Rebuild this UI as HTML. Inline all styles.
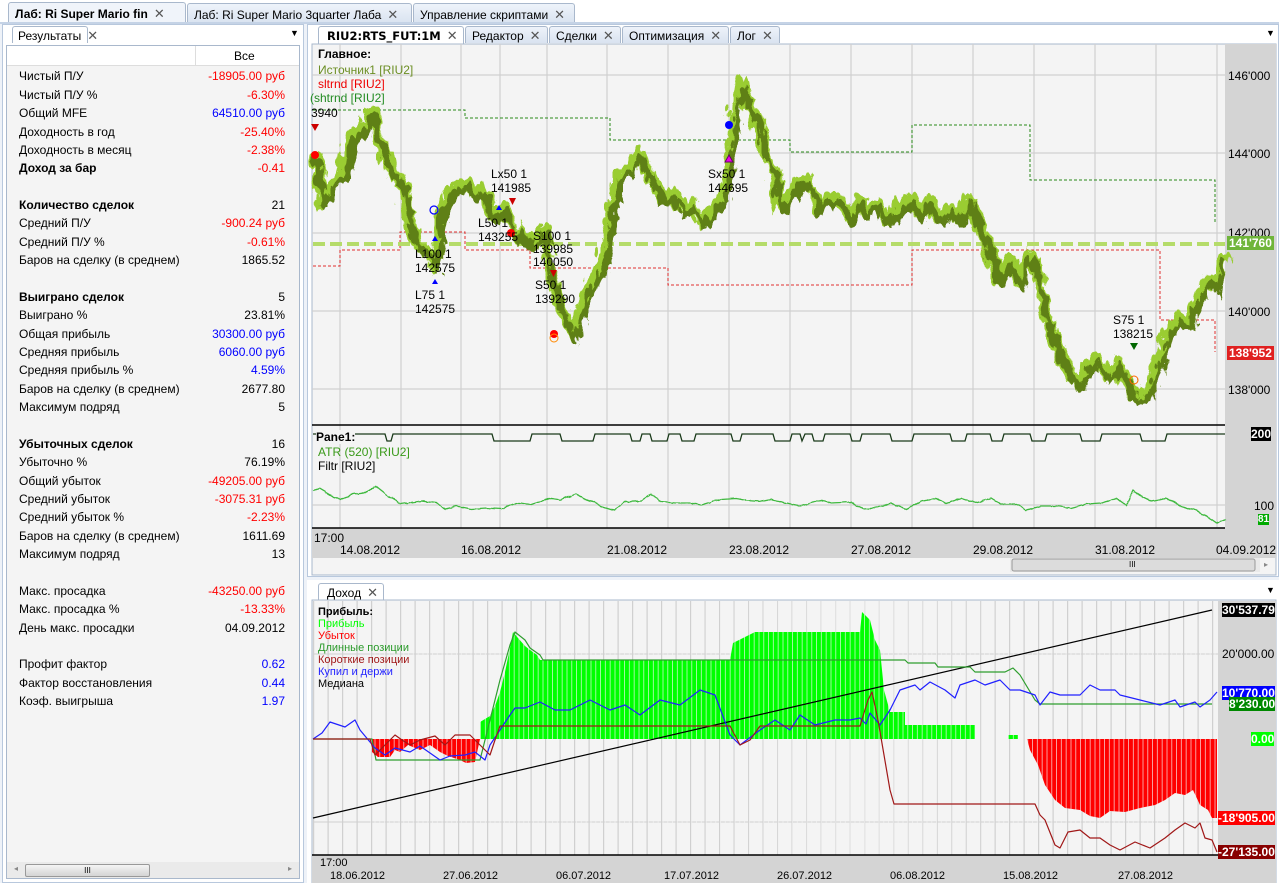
<!DOCTYPE html>
<html><head><meta charset="utf-8"><style>
*{margin:0;padding:0;box-sizing:border-box}
body{width:1279px;height:883px;overflow:hidden;background:#eef2f8;font-family:"Liberation Sans","DejaVu Sans",sans-serif;font-size:12px;color:#000;position:relative}
.a{position:absolute}
.tab{position:absolute;height:21px;border:1px solid #a9b8cc;border-bottom:none;background:linear-gradient(#eef3fa,#d9e3f0);font-size:12px;padding:3px 6px;white-space:nowrap;border-radius:3px 3px 0 0}
.tab.on{background:#f0f4fa;font-weight:bold}
.x{color:#555;font-weight:normal;margin-left:6px;font-size:13px}
.row{position:absolute;left:19px;width:266px;height:16px;font-size:12px}
.row span{position:absolute;right:0}
.r{color:#f00}.b{color:#00f}
.lbl{position:absolute;font-size:12px;font-family:"Liberation Sans",sans-serif;white-space:nowrap}
</style></head><body>
<div class="a" style="left:0;top:0;width:1279px;height:23px;background:#fff"></div>
<div class="tab on" style="left:8px;top:2px;width:178px;height:21px">Лаб: Ri Super Mario fin<span class="x">✕</span></div>
<div class="tab" style="left:187px;top:3px;width:225px;height:20px">Лаб: Ri Super Mario 3quarter Лаба<span class="x">✕</span></div>
<div class="tab" style="left:413px;top:3px;width:162px;height:20px">Управление скриптами<span class="x">✕</span></div>
<div class="a" style="left:0;top:22px;width:1279px;height:2px;background:#c5d3e6"></div>

<div class="a" style="left:2px;top:24px;width:302px;height:859px;background:#fff;border:1px solid #b8c8dd"></div>
<div class="tab" style="left:12px;top:26px;width:76px;height:17px;padding:1px 5px;background:#fff;font-size:12px">Результаты<span class="x">✕</span></div>
<div class="a" style="left:290px;top:28px;font-size:9px">▼</div>
<div class="a" style="left:6px;top:45px;width:294px;height:834px;background:#f4f4f4;border:1px solid #a9b8cc"></div>
<div class="a" style="left:7px;top:46px;width:292px;height:20px;background:#fff;border-bottom:1px solid #ddd"></div>
<div class="a" style="left:195px;top:46px;width:1px;height:20px;background:#ddd"></div>
<div class="a" style="left:234px;top:49px;font-size:12px">Все</div>
<div class="row" style="top:69px">Чистый П/У<span class="r">-18905.00 руб</span></div>
<div class="row" style="top:88px">Чистый П/У %<span class="r">-6.30%</span></div>
<div class="row" style="top:106px">Общий MFE<span class="b">64510.00 руб</span></div>
<div class="row" style="top:125px">Доходность в год<span class="r">-25.40%</span></div>
<div class="row" style="top:143px">Доходность в месяц<span class="r">-2.38%</span></div>
<div class="row" style="top:161px;font-weight:bold">Доход за бар<span class="r" style="font-weight:normal">-0.41</span></div>
<div class="row" style="top:198px;font-weight:bold">Количество сделок<span style="font-weight:normal">21</span></div>
<div class="row" style="top:216px">Средний П/У<span class="r">-900.24 руб</span></div>
<div class="row" style="top:235px">Средний П/У %<span class="r">-0.61%</span></div>
<div class="row" style="top:253px">Баров на сделку (в среднем)<span>1865.52</span></div>
<div class="row" style="top:290px;font-weight:bold">Выиграно сделок<span style="font-weight:normal">5</span></div>
<div class="row" style="top:308px">Выиграно %<span>23.81%</span></div>
<div class="row" style="top:327px">Общая прибыль<span class="b">30300.00 руб</span></div>
<div class="row" style="top:345px">Средняя прибыль<span class="b">6060.00 руб</span></div>
<div class="row" style="top:363px">Средняя прибыль %<span class="b">4.59%</span></div>
<div class="row" style="top:382px">Баров на сделку (в среднем)<span>2677.80</span></div>
<div class="row" style="top:400px">Максимум подряд<span>5</span></div>
<div class="row" style="top:437px;font-weight:bold">Убыточных сделок<span style="font-weight:normal">16</span></div>
<div class="row" style="top:455px">Убыточно %<span>76.19%</span></div>
<div class="row" style="top:474px">Общий убыток<span class="r">-49205.00 руб</span></div>
<div class="row" style="top:492px">Средний убыток<span class="r">-3075.31 руб</span></div>
<div class="row" style="top:510px">Средний убыток %<span class="r">-2.23%</span></div>
<div class="row" style="top:529px">Баров на сделку (в среднем)<span>1611.69</span></div>
<div class="row" style="top:547px">Максимум подряд<span>13</span></div>
<div class="row" style="top:584px">Макс. просадка<span class="r">-43250.00 руб</span></div>
<div class="row" style="top:602px">Макс. просадка %<span class="r">-13.33%</span></div>
<div class="row" style="top:621px">День макс. просадки<span>04.09.2012</span></div>
<div class="row" style="top:657px">Профит фактор<span class="b">0.62</span></div>
<div class="row" style="top:676px">Фактор восстановления<span class="b">0.44</span></div>
<div class="row" style="top:694px">Коэф. выигрыша<span class="b">1.97</span></div>
<div class="a" style="left:7px;top:862px;width:292px;height:16px;background:#eaeaea"></div>
<div class="a" style="left:25px;top:864px;width:125px;height:13px;border:1px solid #999;border-radius:2px;background:linear-gradient(#f4f4f4,#d4d4d4);font-size:8px;text-align:center;line-height:11px">III</div>
<div class="a" style="left:14px;top:864px;font-size:8px;color:#888">◂</div>
<div class="a" style="left:288px;top:864px;font-size:8px;color:#888">▸</div>

<div class="a" style="left:307px;top:24px;width:972px;height:553px;background:#fff;border:1px solid #b8c8dd"></div>
<div class="tab on" style="left:318px;top:26px;width:146px;height:18px;padding:2px 8px;font-family:'DejaVu Sans',sans-serif;font-size:11.5px;background:#fff">RIU2:RTS_FUT:1M<span class="x">✕</span></div>
<div class="tab" style="left:465px;top:26px;width:83px;height:17px;padding:1px 6px">Редактор<span class="x">✕</span></div>
<div class="tab" style="left:549px;top:26px;width:72px;height:17px;padding:1px 6px">Сделки<span class="x">✕</span></div>
<div class="tab" style="left:622px;top:26px;width:107px;height:17px;padding:1px 6px">Оптимизация<span class="x">✕</span></div>
<div class="tab" style="left:730px;top:26px;width:50px;height:17px;padding:1px 6px">Лог<span class="x">✕</span></div>
<div class="a" style="left:1266px;top:28px;font-size:9px">▼</div>

<svg class="a" style="left:0;top:0" width="1279" height="883">
<defs>
<filter id="rough" x="-2%" y="-10%" width="104%" height="120%"><feTurbulence type="turbulence" baseFrequency="0.09 0.04" numOctaves="2" seed="4"/><feDisplacementMap in="SourceGraphic" scale="14" xChannelSelector="R" yChannelSelector="G"/></filter>
<filter id="rough2" x="-2%" y="-20%" width="104%" height="140%"><feTurbulence type="turbulence" baseFrequency="0.1 0.05" numOctaves="1" seed="7"/><feDisplacementMap in="SourceGraphic" scale="3" xChannelSelector="R" yChannelSelector="G"/></filter>
</defs>
<rect x="312" y="44" width="964" height="531" fill="#f4f4f4" stroke="#a9b8cc"/>
<rect x="1225" y="44" width="51" height="484" fill="#d4d4d4"/>
<rect x="312" y="528" width="964" height="30" fill="#d4d4d4"/>
<g stroke="#d0d0d0" stroke-width="1.2">
<line x1="340" y1="44" x2="340" y2="528"/><line x1="401" y1="44" x2="401" y2="528"/><line x1="461" y1="44" x2="461" y2="528"/><line x1="500" y1="44" x2="500" y2="528"/><line x1="547" y1="44" x2="547" y2="528"/><line x1="607" y1="44" x2="607" y2="528"/><line x1="668" y1="44" x2="668" y2="528"/><line x1="729" y1="44" x2="729" y2="528"/><line x1="790" y1="44" x2="790" y2="528"/><line x1="851" y1="44" x2="851" y2="528"/><line x1="912" y1="44" x2="912" y2="528"/><line x1="973" y1="44" x2="973" y2="528"/><line x1="1034" y1="44" x2="1034" y2="528"/><line x1="1095" y1="44" x2="1095" y2="528"/><line x1="1156" y1="44" x2="1156" y2="528"/><line x1="1217" y1="44" x2="1217" y2="528"/>
<line x1="312" y1="75" x2="1225" y2="75"/><line x1="312" y1="153" x2="1225" y2="153"/><line x1="312" y1="233" x2="1225" y2="233"/><line x1="312" y1="311" x2="1225" y2="311"/><line x1="312" y1="389" x2="1225" y2="389"/>
<line x1="312" y1="505" x2="1225" y2="505"/>
</g>
<polyline fill="none" stroke="#2a8a1a" stroke-width="1" stroke-dasharray="3,2" points="313,110 465,110 465,118 610,118 610,140 790,140 790,152 912,152 912,125 1030,125 1030,180 1215,180 1215,222"/>
<polyline fill="none" stroke="#e03030" stroke-width="1" stroke-dasharray="3,2" points="313,266 340,266 340,250 400,250 400,232 465,232 465,250 530,250 530,268 668,268 668,285 912,285 912,250 1160,250 1160,320 1215,320 1215,352"/>
<line x1="313" y1="244" x2="1225" y2="244" stroke="#b5dc6a" stroke-width="4" stroke-dasharray="12,5"/>
<g fill="none" stroke-linejoin="round" filter="url(#rough)">
<polyline stroke="#9acd32" stroke-width="12" points="313,150 320,200 330,180 340,170 350,130 360,125 370,110 380,150 390,170 400,185 405,215 415,240 425,250 432,265 440,200 450,185 460,180 470,190 480,185 490,210 500,205 510,220 520,235 530,240 540,225 548,270 555,300 562,320 570,332 578,305 588,280 600,255 608,210 615,175 625,165 635,150 645,170 660,195 670,190 680,205 690,200 700,220 710,205 720,190 727,150 733,100 738,80 745,100 752,110 760,150 770,165 778,205 785,195 795,180 805,175 815,205 825,195 835,195 845,215 855,195 865,210 875,200 885,215 895,205 905,195 915,210 925,195 935,215 945,205 955,215 965,195 975,225 985,240 995,275 1005,255 1015,280 1025,250 1035,275 1045,320 1055,345 1065,370 1075,380 1085,360 1095,355 1105,375 1115,360 1125,385 1135,395 1145,385 1155,360 1165,330 1175,315 1185,320 1195,290 1205,275 1212,285 1222,250"/>
<polyline stroke="#5f8012" stroke-width="7" points="313,155 322,205 332,185 342,175 352,135 362,130 372,115 382,155 392,175 402,190 407,220 417,245 427,255 434,268 442,205 452,190 462,185 472,195 482,190 492,215 502,210 512,225 522,240 532,245 542,230 550,275 557,305 564,325 572,337 580,310 590,285 602,260 610,215 617,180 627,170 637,155 647,175 662,200 672,195 682,210 692,205 702,225 712,210 722,195 729,155 735,105 740,85 747,105 754,115 762,155 772,170 780,210 787,200 797,185 807,180 817,210 827,200 837,200 847,220 857,200 867,215 877,205 887,220 897,210 907,200 917,215 927,200 937,220 947,210 957,220 967,200 977,230 987,245 997,280 1007,260 1017,285 1027,255 1037,280 1047,325 1057,350 1067,375 1077,385 1087,365 1097,360 1107,380 1117,365 1127,390 1137,400 1147,390 1157,365 1167,335 1177,320 1187,325 1197,295 1207,280 1214,290 1222,255"/>
</g>
<circle cx="315" cy="155" r="4" fill="#f00"/><path d="M311,124 h8 l-4,7z" fill="#c00"/>
<circle cx="434" cy="210" r="4" fill="none" stroke="#00f" stroke-width="1.2"/>
<path d="M435,236 l-3,5 h6z M435,279 l-3,5 h6z M499,205 l-3,5 h6z" fill="#00f"/>
<path d="M509,198 h7 l-3.5,7z M550,270 h7 l-3.5,7z" fill="#c00"/>
<circle cx="511" cy="233" r="4" fill="#f00"/><circle cx="554" cy="334" r="4" fill="#f00"/><circle cx="554" cy="338" r="4" fill="none" stroke="#f80"/>
<circle cx="729" cy="125" r="4" fill="#00f"/><path d="M729,155 l-4,7 h8z" fill="#e0e" stroke="#606"/>
<circle cx="1134" cy="380" r="4" fill="none" stroke="#f60"/><path d="M1130,343 h8 l-4,7z" fill="#060"/>
<line x1="312" y1="425" x2="1225" y2="425" stroke="#000" stroke-width="1.5"/>
<line x1="312" y1="528" x2="1225" y2="528" stroke="#000" stroke-width="1.5"/>
<polyline fill="none" stroke="#1a3a1a" stroke-width="1.3" points="313,434 385,434 387,441 391,441 393,434 492,434 494,441 530,441 532,434 560,434 562,441 593,441 595,434 630,434 632,441 640,441 642,434 650,434 652,441 667,441 669,434 680,434 682,441 694,441 696,434 731,434 733,441 740,441 742,434 773,434 775,441 790,441 792,434 800,434 802,441 805,434 812,434 814,441 823,441 825,434 850,434 852,441 860,441 862,434 890,434 892,441 912,441 914,434 950,434 952,441 965,441 967,434 990,434 992,441 1002,441 1004,434 1030,434 1032,441 1045,441 1047,434 1080,434 1082,441 1100,441 1102,434 1140,434 1142,441 1165,441 1167,434 1225,434"/>
<polyline fill="none" stroke="#3cb83c" stroke-width="1.3" filter="url(#rough2)" points="313,490 318,488 330,495 340,498 350,494 362,492 375,486 385,494 400,503 420,500 435,502 445,508 455,505 470,508 485,507 500,508 515,502 530,504 548,497 560,499 575,493 585,498 600,505 613,509 625,501 640,500 650,493 660,501 675,502 690,502 700,504 720,498 735,497 745,499 760,500 770,498 785,502 800,505 820,499 830,502 850,501 862,508 875,507 890,502 905,508 920,500 935,497 945,502 960,497 975,502 990,497 1000,503 1015,503 1025,509 1040,505 1055,505 1070,507 1085,503 1100,502 1115,497 1125,504 1132,490 1140,495 1150,500 1165,497 1180,505 1195,510 1205,515 1215,522 1225,518"/>
<rect x="1010" y="558" width="250" height="14" fill="#eaeaea"/>
<rect x="1012" y="559" width="243" height="12" rx="2" fill="#dcdcdc" stroke="#999"/>
</svg>
<div class="a" style="left:1129px;top:560px;font-size:8px">III</div>
<div class="a" style="left:1264px;top:560px;font-size:8px;color:#888">▸</div>

<div class="lbl" style="left:318px;top:47px;font-weight:bold">Главное:</div>
<div class="lbl" style="left:318px;top:63px;color:#6b8e23">Источник1 [RIU2]</div>
<div class="lbl" style="left:318px;top:77px;color:#e00">sltrnd [RIU2]</div>
<div class="lbl" style="left:310px;top:91px;color:#228b22">(shtrnd [RIU2]</div>
<div class="lbl" style="left:311px;top:106px">3940</div>
<div class="lbl" style="left:491px;top:167px">Lx50 1<br>141985</div>
<div class="lbl" style="left:478px;top:216px">L50 1<br>143255</div>
<div class="lbl" style="left:415px;top:247px">L100 1<br>142575</div>
<div class="lbl" style="left:415px;top:288px">L75 1<br>142575</div>
<div class="lbl" style="left:533px;top:230px;line-height:13px">S100 1<br>139985<br>140050</div>
<div class="lbl" style="left:535px;top:278px">S50 1<br>139290</div>
<div class="lbl" style="left:708px;top:167px">Sx50 1<br>144695</div>
<div class="lbl" style="left:1113px;top:313px">S75 1<br>138215</div>
<div class="lbl" style="left:1228px;top:69px">146'000</div>
<div class="lbl" style="left:1228px;top:147px">144'000</div>
<div class="lbl" style="left:1228px;top:226px">142'000</div>
<div class="lbl" style="left:1228px;top:305px">140'000</div>
<div class="lbl" style="left:1228px;top:383px">138'000</div>
<div class="lbl" style="left:1227px;top:236px;background:#6fb53a;color:#fff;padding:0 2px;font-weight:bold">141'760</div>
<div class="lbl" style="left:1227px;top:346px;background:#e02020;color:#fff;padding:0 2px;font-weight:bold">138'952</div>
<div class="lbl" style="left:316px;top:430px;font-weight:bold;background:#f4f4f4">Pane1:</div>
<div class="lbl" style="left:318px;top:445px;color:#3a9a1a">ATR (520) [RIU2]</div>
<div class="lbl" style="left:318px;top:459px">Filtr [RIU2]</div>
<div class="lbl" style="left:1251px;top:427px;background:#000;color:#fff;font-weight:bold">200</div>
<div class="lbl" style="left:1254px;top:499px">100</div>
<div class="lbl" style="left:1258px;top:514px;background:#0a0;color:#fff;font-weight:bold;font-size:10px">81</div>
<div class="lbl" style="left:314px;top:531px">17:00</div>
<div class="lbl" style="left:340px;top:543px">14.08.2012</div>
<div class="lbl" style="left:461px;top:543px">16.08.2012</div>
<div class="lbl" style="left:607px;top:543px">21.08.2012</div>
<div class="lbl" style="left:729px;top:543px">23.08.2012</div>
<div class="lbl" style="left:851px;top:543px">27.08.2012</div>
<div class="lbl" style="left:973px;top:543px">29.08.2012</div>
<div class="lbl" style="left:1095px;top:543px">31.08.2012</div>
<div class="lbl" style="left:1216px;top:543px;width:60px;overflow:hidden">04.09.2012</div>

<div class="a" style="left:307px;top:580px;width:972px;height:303px;background:#fff"></div>
<div class="tab" style="left:318px;top:583px;width:66px;height:17px;padding:1px 8px;background:#fff">Доход<span class="x">✕</span></div>
<div class="a" style="left:1266px;top:585px;font-size:9px">▼</div>
<svg class="a" style="left:0;top:0" width="1279" height="883">
<defs><pattern id="vg" x="313" y="0" width="14.5" height="10" patternUnits="userSpaceOnUse"><rect width="14.5" height="10" fill="#f4f4f4"/><rect x="0" width="1.2" height="10" fill="#d0d0d0"/></pattern>
<pattern id="bar" x="313" y="0" width="4.8" height="10" patternUnits="userSpaceOnUse"><rect width="4.8" height="10" fill="none"/><rect x="4" width="0.8" height="10" fill="#f4f4f4" opacity=".8"/></pattern></defs>
<rect x="312" y="600" width="964" height="283" fill="#f4f4f4" stroke="#a9b8cc"/>
<rect x="313" y="601" width="905" height="254" fill="url(#vg)"/>
<rect x="1218" y="601" width="58" height="254" fill="#d4d4d4"/>
<rect x="312" y="855" width="964" height="28" fill="#d4d4d4"/>
<line x1="313" y1="654" x2="1218" y2="654" stroke="#d0d0d0"/><line x1="313" y1="822" x2="1218" y2="822" stroke="#d0d0d0"/>
<polygon fill="#00ff00" points="480,739 480,722 490,716 495,706 500,692 505,672 510,648 513,632 518,638 525,646 530,650 537,655 540,660 730,660 733,643 745,637 755,632 860,632 862,612 870,620 875,640 880,650 884,690 890,712 905,712 905,725 975,725 975,739"/>
<polygon fill="#00ff00" points="1008,739 1008,735 1018,735 1018,739"/>
<polygon fill="#ff0000" points="372,739 372,752 378,757 390,757 395,750 400,752 408,745 420,750 430,745 440,752 448,756 460,760 466,763 475,762 480,739"/>
<polygon fill="#ff0000" points="1027,739 1030,750 1038,765 1045,785 1055,800 1065,808 1080,810 1090,816 1100,818 1110,811 1125,812 1140,808 1155,805 1165,800 1175,793 1185,795 1193,790 1200,805 1208,810 1212,818 1217,818 1217,739"/>
<rect x="370" y="601" width="848" height="254" fill="url(#bar)"/>
<g fill="none" stroke-width="1.2" stroke-linejoin="round">
<polyline stroke="#000" points="313,818 1212,610"/>
<polyline stroke="#2e9e2e" points="313,739 372,739 376,760 480,760 490,720 500,680 510,645 515,632 525,640 530,648 540,655 543,660 880,660 905,660 908,663 935,663 938,667 970,667 975,672 1005,672 1013,668 1020,675 1035,700 1040,704 1212,704"/>
<polyline stroke="#2020ff" points="313,739 322,733 330,722 345,727 355,720 360,730 375,748 385,755 395,748 410,752 420,746 440,760 450,756 465,755 475,752 485,760 490,745 500,730 510,715 515,708 525,708 540,702 555,710 570,710 590,700 610,710 625,705 640,715 660,700 680,705 700,690 715,695 730,735 740,745 760,730 775,720 790,730 800,715 815,725 835,720 850,720 860,718 866,724 870,713 880,725 890,710 900,690 915,685 920,690 930,682 945,690 955,698 960,685 975,680 985,685 1000,680 1010,690 1020,690 1035,695 1040,705 1050,692 1060,695 1080,695 1090,685 1100,690 1115,690 1120,695 1140,700 1160,705 1175,700 1180,707 1195,702 1200,707 1210,700 1217,692"/>
<polyline stroke="#a01818" points="313,739 370,739 375,755 385,745 395,735 402,740 410,745 420,740 435,736 445,745 455,735 470,735 480,745 490,755 495,740 500,726 730,726 740,745 750,740 760,726 860,726 868,700 872,692 878,720 884,755 890,790 894,804 1035,804 1040,815 1045,820 1055,845 1060,848 1068,832 1080,830 1090,838 1100,838 1110,845 1120,850 1135,842 1150,848 1165,838 1175,830 1185,823 1195,828 1200,823 1205,838 1212,840 1217,852"/>
</g>
<line x1="312" y1="855" x2="1218" y2="855" stroke="#000" stroke-width="1.5"/>
</svg>
<div class="lbl" style="left:318px;top:606px;font-weight:bold;font-size:11px">Прибыль:</div>
<div class="lbl" style="left:318px;top:618px;color:#0f0;font-size:11px">Прибыль</div>
<div class="lbl" style="left:318px;top:630px;color:#f00;font-size:11px">Убыток</div>
<div class="lbl" style="left:318px;top:642px;color:#2a9a2a;font-size:11px">Длинные позиции</div>
<div class="lbl" style="left:318px;top:654px;color:#a01818;font-size:11px">Короткие позиции</div>
<div class="lbl" style="left:318px;top:666px;color:#22f;font-size:11px">Купил и держи</div>
<div class="lbl" style="left:318px;top:678px;font-size:11px">Медиана</div>
<div class="lbl" style="left:1222px;top:603px;background:#000;color:#fff;font-weight:bold">30'537.79</div>
<div class="lbl" style="left:1222px;top:647px">20'000.00</div>
<div class="lbl" style="left:1222px;top:686px;background:#00f;color:#fff;font-weight:bold">10'770.00</div>
<div class="lbl" style="left:1229px;top:697px;background:#080;color:#fff;font-weight:bold">8'230.00</div>
<div class="lbl" style="left:1251px;top:732px;background:#0f0;color:#fff;font-weight:bold">0.00</div>
<div class="lbl" style="left:1218px;top:811px;background:#f00;color:#fff;font-weight:bold">-18'905.00</div>
<div class="lbl" style="left:1218px;top:845px;background:#800;color:#fff;font-weight:bold">-27'135.00</div>
<div class="lbl" style="left:320px;top:857px;font-size:11px">17:00</div>
<div class="lbl" style="left:330px;top:870px;font-size:11px">18.06.2012</div>
<div class="lbl" style="left:443px;top:870px;font-size:11px">27.06.2012</div>
<div class="lbl" style="left:556px;top:870px;font-size:11px">06.07.2012</div>
<div class="lbl" style="left:664px;top:870px;font-size:11px">17.07.2012</div>
<div class="lbl" style="left:777px;top:870px;font-size:11px">26.07.2012</div>
<div class="lbl" style="left:890px;top:870px;font-size:11px">06.08.2012</div>
<div class="lbl" style="left:1003px;top:870px;font-size:11px">15.08.2012</div>
<div class="lbl" style="left:1118px;top:870px;font-size:11px">27.08.2012</div>
</body></html>
